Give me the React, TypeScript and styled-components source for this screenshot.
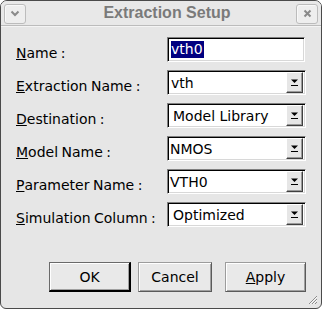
import React from 'react';
import styled, { createGlobalStyle } from 'styled-components';

const GlobalStyle = createGlobalStyle`
  html, body {
    margin: 0;
    padding: 0;
    background: #ffffff;
  }
  * {
    box-sizing: border-box;
  }
`

const Window = styled.div`
  position: relative;
  width: 322px;
  height: 309px;
  display: flex;
  flex-direction: column;
  background: #e6e6e6;
  border: 1px solid #4a4a4a;
  border-radius: 7px 7px 6px 6px;
  overflow: hidden;
  font-family: "DejaVu Sans", Verdana, sans-serif;
  font-size: 14px;
  color: #000;
`

const TitleBar = styled.div`
  height: 25px;
  display: flex;
  align-items: center;
  padding: 0 3px 0 3px;
  background: #e8e8e8;
  border-bottom: 1px solid #bcbcbc;
  box-shadow: 0 1px 0 #f4f4f4;
`

const Title = styled.div`
  flex: 1;
  text-align: center;
  padding-left: 12px;
  font-family: "Liberation Sans", Arial, sans-serif;
  font-weight: bold;
  font-size: 16px;
  color: #7a7a7a;
`

const TitleButton = styled.div`
  width: 22px;
  height: 20px;
  margin-top: 1px;
  display: flex;
  align-items: center;
  justify-content: center;
  border: 1px solid #bcbcbc;
  border-radius: 3px;
  background: #eeeeee;
  box-shadow: inset 1px 1px 0 #f8f8f8;
`

const Body = styled.div`
  display: grid;
  grid-template-columns: 151px 139px;
  grid-auto-rows: 25px;
  row-gap: 8px;
  padding: 11px 0 0 15px;
`

const Label = styled.div`
  display: flex;
  align-items: center;
  white-space: pre;
  word-spacing: -1px;
  padding-top: 6px;
`

const Sunken = styled.div`
  display: flex;
  align-items: center;
  background: #ffffff;
  border: 1px solid;
  border-color: #808080 #ffffff #ffffff #808080;
  box-shadow: inset 1px 1px 0 #000000, inset -1px -1px 0 #d8d8d8;
  overflow: hidden;
`

const InputBox = styled(Sunken)`
  padding-left: 3px;
  margin-right: 1px;
`

const Selected = styled.span`
  background: #000080;
  color: #ffffff;
  line-height: 17px;
  padding: 0 1px 0 0;
`

const ComboText = styled.div<{ $pad: number }>`
  flex: 1;
  padding-left: ${({ $pad }) => $pad}px;
  white-space: nowrap;
`

const ArrowButton = styled.div`
  width: 17px;
  height: 21px;
  margin-right: 2px;
  display: flex;
  align-items: center;
  justify-content: center;
  background: #e6e6e6;
  border: 1px solid;
  border-color: #ffffff #404040 #404040 #ffffff;
  box-shadow: inset -1px -1px 0 #9a9a9a;
`

const ButtonRow = styled.div`
  display: flex;
  justify-content: flex-end;
  align-items: center;
  margin-top: 35px;
  padding-right: 15px;
`

const Button = styled.button<{ $w: number; $def?: boolean; $ml: number }>`
  width: ${({ $w }) => $w}px;
  height: 30px;
  margin-left: ${({ $ml }) => $ml}px;
  font-family: "DejaVu Sans", Verdana, sans-serif;
  font-size: 14px;
  color: #000;
  background: #e9e9e9;
  padding: 0;
  border: 1px solid;
  border-color: ${({ $def }) => ($def ? '#6a6a6a #000 #000 #6a6a6a' : '#9c9c9c #5a5a5a #5a5a5a #9c9c9c')};
  border-width: ${({ $def }) => ($def ? '1px 2px 2px 1px' : '1px')};
  box-shadow: inset 1px 1px 0 #ffffff, inset -1px -1px 0 #a0a0a0;
`

const Grip = styled.svg`
  position: absolute;
  right: 3px;
  bottom: 3px;
`

function ComboArrow() {
  return (
    <svg width="9" height="9" viewBox="0 0 9 9">
      <path d="M1 1.5 H8 L4.5 5 Z" fill="#000" />
      <rect x="1" y="7" width="7" height="1" fill="#000" />
    </svg>
  )
}

interface ComboProps {
  value: string
  pad: number
}

function Combo({ value, pad }: ComboProps) {
  return (
    <Sunken>
      <ComboText $pad={pad}>{value}</ComboText>
      <ArrowButton>
        <ComboArrow />
      </ArrowButton>
    </Sunken>
  )
}

const rows = [
  { key: 'E', rest: 'xtraction Name :', value: 'vth', pad: 3 },
  { key: 'D', rest: 'estination :', value: 'Model Library', pad: 5 },
  { key: 'M', rest: 'odel Name :', value: 'NMOS', pad: 2 },
  { key: 'P', rest: 'arameter Name :', value: 'VTH0', pad: 2 },
  { key: 'S', rest: 'imulation Column :', value: 'Optimized', pad: 5 },
]

export default function App(): JSX.Element {
  return (
    <>
      <GlobalStyle />
      <Window>
        <TitleBar>
          <TitleButton>
            <svg width="10" height="7" viewBox="0 0 10 7">
              <path d="M1.5 1.5 L5 5 L8.5 1.5" stroke="#8a8a8a" strokeWidth="2" fill="none" />
            </svg>
          </TitleButton>
          <Title>Extraction Setup</Title>
          <TitleButton>
            <svg width="9" height="9" viewBox="0 0 9 9">
              <path d="M1.5 1.5 L7.5 7.5 M7.5 1.5 L1.5 7.5" stroke="#8a8a8a" strokeWidth="2" />
            </svg>
          </TitleButton>
        </TitleBar>

        <Body>
          <Label><u>N</u>ame :</Label>
          <InputBox><Selected>vth0</Selected></InputBox>
          {rows.map(r => (
            <React.Fragment key={r.key}>
              <Label><u>{r.key}</u>{r.rest}</Label>
              <Combo value={r.value} pad={r.pad} />
            </React.Fragment>
          ))}
        </Body>

        <ButtonRow>
          <Button $w={82} $def $ml={0}>OK</Button>
          <Button $w={74} $ml={7}>Cancel</Button>
          <Button $w={81} $ml={13}><u>A</u>pply</Button>
        </ButtonRow>

        <Grip width="12" height="12" viewBox="0 0 12 12">
          <path d="M11 3 L3 11 M11 6 L6 11 M11 9 L9 11" stroke="#8c8c8c" strokeWidth="1" />
          <path d="M11 4 L4 11 M11 7 L7 11" stroke="#f6f6f6" strokeWidth="1" />
        </Grip>
      </Window>
    </>
  )
}
